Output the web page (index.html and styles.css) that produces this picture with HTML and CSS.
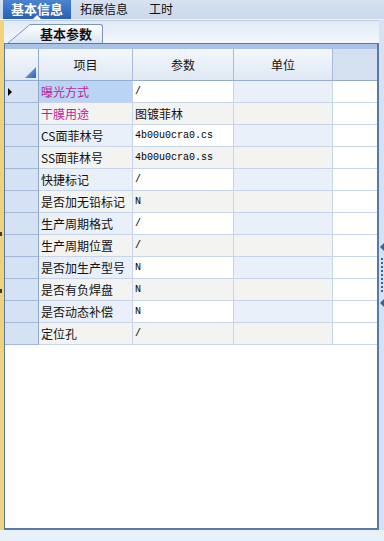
FILE: index.html
```html
<!DOCTYPE html>
<html lang="zh">
<head>
    <meta charset="UTF-8">
    <title>基本信息</title>
    <link rel="stylesheet" href="styles.css">
</head>
<body>
    <div class="topbar">
        <div class="toptab active">基本信息</div>
        <div class="toptab">拓展信息</div>
        <div class="toptab">工时</div>
    </div>

    <div class="main">
        <div class="edge-left">
            <span class="grip"></span>
            <span class="grip"></span>
        </div>

        <div class="page">
            <div class="subtabs">
                <div class="subtab">
                    <svg class="subtab-slope" width="22" height="19" viewBox="0 0 22 19">
                        <defs>
                            <linearGradient id="tabfill" x1="0" y1="0" x2="0" y2="1">
                                <stop offset="0" stop-color="#ffffff"/>
                                <stop offset="1" stop-color="#d9e5f4"/>
                            </linearGradient>
                        </defs>
                        <polygon points="0,19 22,0.5 22,19" fill="url(#tabfill)"/>
                        <line x1="0" y1="19" x2="22" y2="0.5" stroke="#7b95bc" stroke-width="1"/>
                    </svg>
                    <div class="subtab-label">基本参数</div>
                </div>
            </div>

            <div class="grid">
                <div class="band"></div>
                <div class="row hdr">
                    <div class="cell corner">
                        <svg width="11" height="11" viewBox="0 0 11 11">
                            <defs>
                                <linearGradient id="tri" x1="0" y1="0" x2="1" y2="1">
                                    <stop offset="0" stop-color="#8fb3e6"/>
                                    <stop offset="1" stop-color="#2f64b8"/>
                                </linearGradient>
                            </defs>
                            <polygon points="0,11 11,0 11,11" fill="url(#tri)"/>
                        </svg>
                    </div>
                    <div class="cell">项目</div>
                    <div class="cell">参数</div>
                    <div class="cell">单位</div>
                    <div class="cell extra"></div>
                </div>

                <div class="row odd">
                    <div class="cell selector"><span class="arrow"></span></div>
                    <div class="cell item selected pink">曝光方式</div>
                    <div class="cell param mono">/</div>
                    <div class="cell unit"></div>
                    <div class="cell extra"></div>
                </div>
                <div class="row even">
                    <div class="cell selector"></div>
                    <div class="cell item pink">干膜用途</div>
                    <div class="cell param">图镀菲林</div>
                    <div class="cell unit"></div>
                    <div class="cell extra"></div>
                </div>
                <div class="row odd">
                    <div class="cell selector"></div>
                    <div class="cell item">CS面菲林号</div>
                    <div class="cell param mono">4b00u0cra0.cs</div>
                    <div class="cell unit"></div>
                    <div class="cell extra"></div>
                </div>
                <div class="row even">
                    <div class="cell selector"></div>
                    <div class="cell item">SS面菲林号</div>
                    <div class="cell param mono">4b00u0cra0.ss</div>
                    <div class="cell unit"></div>
                    <div class="cell extra"></div>
                </div>
                <div class="row odd">
                    <div class="cell selector"></div>
                    <div class="cell item">快捷标记</div>
                    <div class="cell param mono">/</div>
                    <div class="cell unit"></div>
                    <div class="cell extra"></div>
                </div>
                <div class="row even">
                    <div class="cell selector"></div>
                    <div class="cell item">是否加无铅标记</div>
                    <div class="cell param mono">N</div>
                    <div class="cell unit"></div>
                    <div class="cell extra"></div>
                </div>
                <div class="row odd">
                    <div class="cell selector"></div>
                    <div class="cell item">生产周期格式</div>
                    <div class="cell param mono">/</div>
                    <div class="cell unit"></div>
                    <div class="cell extra"></div>
                </div>
                <div class="row even">
                    <div class="cell selector"></div>
                    <div class="cell item">生产周期位置</div>
                    <div class="cell param mono">/</div>
                    <div class="cell unit"></div>
                    <div class="cell extra"></div>
                </div>
                <div class="row odd">
                    <div class="cell selector"></div>
                    <div class="cell item">是否加生产型号</div>
                    <div class="cell param mono">N</div>
                    <div class="cell unit"></div>
                    <div class="cell extra"></div>
                </div>
                <div class="row even">
                    <div class="cell selector"></div>
                    <div class="cell item">是否有负焊盘</div>
                    <div class="cell param mono">N</div>
                    <div class="cell unit"></div>
                    <div class="cell extra"></div>
                </div>
                <div class="row odd">
                    <div class="cell selector"></div>
                    <div class="cell item">是否动态补偿</div>
                    <div class="cell param mono">N</div>
                    <div class="cell unit"></div>
                    <div class="cell extra"></div>
                </div>
                <div class="row even">
                    <div class="cell selector"></div>
                    <div class="cell item">定位孔</div>
                    <div class="cell param mono">/</div>
                    <div class="cell unit"></div>
                    <div class="cell extra"></div>
                </div>
            </div>
        </div>

        <div class="edge-right">
            <span class="split-arrow"></span>
            <span class="split-dots"></span>
            <span class="split-arrow"></span>
        </div>
    </div>
</body>
</html>
```

FILE: styles.css
```css
body {
    margin: 0;
    width: 384px;
    height: 541px;
    overflow: hidden;
    background: #e8f0fa;
    font-family: "Noto Sans CJK SC", "Noto Sans", sans-serif;
    font-size: 12px;
    color: #111;
}

/* top tabs */
.topbar {
    height: 20px;
    box-sizing: border-box;
    display: flex;
    padding-left: 3px;
    background: linear-gradient(#d8e2ef, #c9d8eb);
    border-bottom: 1px solid #eef3fa;
}

.toptab {
    line-height: 18px;
    padding: 0 12px 0 9px;
}

.toptab.active {
    position: relative;
    padding: 0 8px;
    font-size: 13px;
    font-weight: bold;
    color: #fff;
    background: linear-gradient(#4b84d3, #2a60b3);
}

/* little pointer under the active tab */
.toptab.active::after {
    content: "";
    position: absolute;
    left: 50%;
    bottom: 0;
    margin-left: -4px;
    border-left: 4px solid transparent;
    border-right: 4px solid transparent;
    border-bottom: 4px solid #fff;
}

/* main area */
.main {
    display: flex;
    height: 510px;
}

.edge-left {
    width: 4px;
    background: #f1d37e;
    display: flex;
    flex-direction: column;
    justify-content: center;
    gap: 53px;
    padding-bottom: 26px;
    box-sizing: border-box;
}

.grip {
    width: 2px;
    height: 4px;
    background: #3b3b3b;
}

.edge-right {
    width: 5px;
    background: #d6e2f1;
    display: flex;
    flex-direction: column;
    align-items: flex-end;
    justify-content: center;
    gap: 7px;
}

.split-arrow {
    width: 0;
    height: 0;
    border-top: 4px solid transparent;
    border-bottom: 4px solid transparent;
    border-right: 4px solid #40618f;
}

.split-dots {
    width: 2px;
    height: 34px;
    margin-right: 1px;
    background: repeating-linear-gradient(#40618f 0 2px, transparent 2px 4px);
}

.page {
    width: 375px;
    display: flex;
    flex-direction: column;
}

/* inner tab */
.subtabs {
    height: 23px;
    box-sizing: border-box;
    display: flex;
    align-items: flex-end;
    padding-left: 4px;
    border-top: 1px solid #bfcde1;
    background: linear-gradient(#e1eaf6, #f3f7fc);
}

.subtab {
    display: flex;
    height: 19px;
}

.subtab-slope {
    display: block;
}

.subtab-label {
    width: 73px;
    box-sizing: border-box;
    text-align: center;
    line-height: 18px;
    font-size: 13px;
    font-weight: bold;
    border-top: 1px solid #7b95bc;
    border-right: 1px solid #7b95bc;
    border-top-right-radius: 3px;
    background: linear-gradient(#ffffff, #d9e5f4);
}

/* grid */
.grid {
    flex: 1;
    display: flex;
    flex-direction: column;
    background: #fff;
    border: 1px solid #5a7aa6;
    border-right-width: 2px;
    border-bottom-width: 2px;
}

.band {
    height: 5px;
    background: #a9c3e6;
}

.row {
    display: grid;
    grid-template-columns: 34px 94px 101px 99px 1fr;
    height: 22px;
}

.cell {
    box-sizing: border-box;
    border-right: 1px solid #c6d5ea;
    border-bottom: 1px solid #c6d5ea;
    padding-left: 2px;
    line-height: 21px;
    white-space: nowrap;
    overflow: hidden;
}

.cell.extra {
    border-right: none;
}

.hdr {
    height: 32px;
}

.hdr .cell {
    padding: 0;
    text-align: center;
    line-height: 31px;
    background: linear-gradient(#f4f7fc, #dfe8f4);
    border-right-color: #a7bcd8;
    border-bottom-color: #93acd0;
}

.hdr .cell.extra {
    background: #d4e0f0;
}

.hdr .corner {
    display: flex;
    justify-content: flex-end;
    align-items: flex-end;
    padding: 0 2px 2px 0;
    border-right-color: #8ea8c8;
}

.corner svg {
    display: block;
}

.selector {
    display: flex;
    align-items: center;
    padding-left: 3px;
    background: #d5e2f4;
    border-right-color: #8ea8c8;
    border-bottom-color: #a2b8d4;
}

.arrow {
    width: 0;
    height: 0;
    border-top: 4px solid transparent;
    border-bottom: 4px solid transparent;
    border-left: 4px solid #000;
}

.odd .item,
.odd .unit {
    background: #e9f0fa;
}

.odd .param,
.row .extra {
    background: #fff;
}

.even .item,
.even .param,
.even .unit {
    background: #f3f3f2;
}

.cell.selected {
    background: #b9d4f5;
}

.pink {
    color: #c01e96;
}

.mono {
    font-family: "Liberation Mono", monospace;
    font-size: 10px;
    color: #000;
}
```
